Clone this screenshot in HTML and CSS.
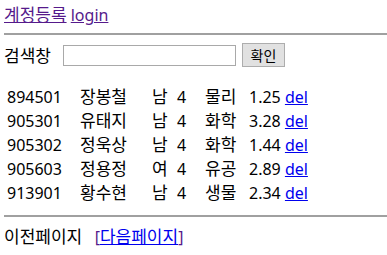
FILE: index.html
```html
<!DOCTYPE html>
<html lang="ko">
<head>
  <meta charset="UTF-8" />
  <title>학생 목록</title>
  <link rel="stylesheet" href="styles.css">
</head>
<body>

  <div class="topLinks">
    <a href="#" class="visited ko">계정등록</a> <a href="#" class="visited">login</a>
  </div>
  <hr class="topLine">

  <form class="searchForm">
    <label for="keyword" class="ko">검색창</label>
    <input type="text" id="keyword">
    <button type="submit">확인</button>
  </form>

  <table class="studentTable">
    <tr>
      <td class="colId">894501</td><td class="colName">장봉철</td><td class="colSex">남</td><td class="colYear">4</td><td class="colMajor">물리</td><td>1.25 <a href="#">del</a></td>
    </tr>
    <tr>
      <td class="colId">905301</td><td class="colName">유태지</td><td class="colSex">남</td><td class="colYear">4</td><td class="colMajor">화학</td><td>3.28 <a href="#">del</a></td>
    </tr>
    <tr>
      <td class="colId">905302</td><td class="colName">정욱상</td><td class="colSex">남</td><td class="colYear">4</td><td class="colMajor">화학</td><td>1.44 <a href="#">del</a></td>
    </tr>
    <tr>
      <td class="colId">905603</td><td class="colName">정용정</td><td class="colSex">여</td><td class="colYear">4</td><td class="colMajor">유공</td><td>2.89 <a href="#">del</a></td>
    </tr>
    <tr>
      <td class="colId">913901</td><td class="colName">황수현</td><td class="colSex">남</td><td class="colYear">4</td><td class="colMajor">생물</td><td>2.34 <a href="#">del</a></td>
    </tr>
  </table>
  <hr class="bottomLine">

  <div class="pager">
    <span class="ko">이전페이지</span> &nbsp; <span class="bracket">[</span><a href="#" class="ko">다음페이지</a><span class="bracket">]</span>
  </div>

</body>
</html>
```

FILE: styles.css
```css
body {
  font-family: "Noto Sans", "Noto Sans CJK KR", sans-serif;
  font-size: 16px;
  line-height: 21px;
  margin: 4px 0 0 4px;
  color: #000;
  background: #fff;
}
.ko {
  font-size: 17px;
}
a {
  color: #0000ee;
}
a.visited {
  color: #551a8b;
}
hr {
  border: 0;
  border-top: 2px solid #a0a0a0;
  margin: 8px 0;
}
.topLine {
  margin-top: 7px;
}
.bottomLine {
  margin-bottom: 9px;
}
.searchForm {
  display: flex;
  align-items: center;
  margin: 0 0 17px;
}
.searchForm label {
  width: 59px;
}
.searchForm input {
  width: 173px;
  height: 21px;
  box-sizing: border-box;
  border: 1px solid #a9a9a9;
  padding: 1px 3px;
  margin: 0 6px 0 0;
}
.searchForm button {
  width: 43px;
  height: 24px;
  box-sizing: border-box;
  border: 1px solid #adadad;
  background: #e1e1e1;
  font-family: "Noto Sans CJK KR", sans-serif;
  font-size: 14px;
  padding: 0;
}
.studentTable {
  border-spacing: 2px;
  margin: 0 0 9px;
}
.studentTable td {
  padding: 1px;
  line-height: 20px;
  white-space: nowrap;
}
.colId {
  width: 69px;
}
.colName, .colSex, .colMajor {
  font-size: 17px;
}
.colName {
  width: 68px;
}
.colSex {
  width: 21px;
}
.colYear {
  width: 24px;
}
.colMajor {
  width: 40px;
}
.pager .bracket {
  color: #551a8b;
}
```
